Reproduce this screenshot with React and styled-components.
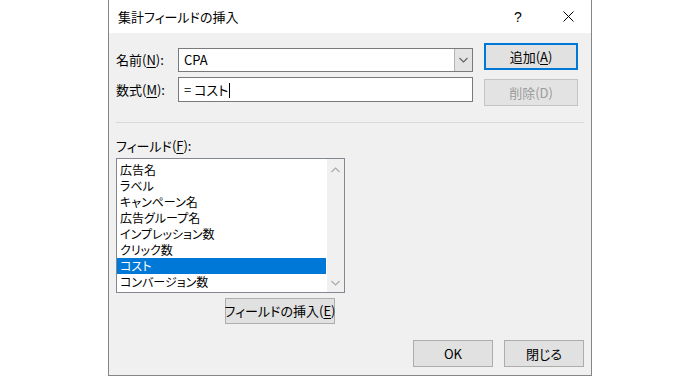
import React from "react";
import styled, { createGlobalStyle } from "styled-components";

const GlobalStyle = createGlobalStyle`
  html, body {
    margin: 0;
    padding: 0;
    background: #ffffff;
  }
  body {
    font-family: "Noto Sans CJK JP", "Noto Sans", sans-serif;
    font-size: 13px;
    color: #000000;
    font-feature-settings: "palt";
  }
`;

const Page = styled.div`
  display: flex;
  padding-left: 108px;
  width: 700px;
  height: 377px;
  box-sizing: border-box;
`;

const Dialog = styled.div`
  display: flex;
  flex-direction: column;
  width: 484px;
  height: 376px;
  box-sizing: border-box;
  border: 1px solid #858585;
  border-top: none;
  background: #f0f0f0;
`;

const TitleBar = styled.div`
  display: flex;
  align-items: center;
  height: 33px;
  background: #ffffff;
  padding-left: 9px;
`;

const Title = styled.div`
  flex: 1;
  font-size: 13px;
  line-height: 16px;
`;

const TitleButton = styled.div`
  display: flex;
  align-items: center;
  justify-content: center;
  width: 46px;
  height: 33px;
  font-family: "Liberation Sans", sans-serif;
  font-size: 14px;
  margin-right: ${(p) => p.$gap || 0}px;
`;

const Body = styled.div`
  display: flex;
  flex-direction: column;
  flex: 1;
  padding: 10px 0 8px 7px;
`;

const TopSection = styled.div`
  display: flex;
`;

const Form = styled.div`
  display: flex;
  flex-direction: column;
  gap: 5px;
  margin-top: 5px;
`;

const FormRow = styled.div`
  display: flex;
  align-items: center;
`;

const Label = styled.div`
  width: 62px;
  line-height: 16px;
`;

const Mn = styled.span`
  text-decoration: underline;
  text-underline-offset: 2px;
`;

const TextBox = styled.div`
  display: flex;
  align-items: center;
  width: 295px;
  height: ${(p) => p.$h}px;
  box-sizing: border-box;
  border: 1px solid #7a7a7a;
  background: #ffffff;
  padding-left: 5px;
`;

const BoxText = styled.span`
  flex: 1;
  line-height: 16px;
`;

const Caret = styled.span`
  display: inline-block;
  width: 0;
  height: 15px;
  border-left: 1px solid #000;
  margin-left: 1px;
  vertical-align: -3px;
`;

const DropButton = styled.div`
  display: flex;
  align-items: center;
  justify-content: center;
  width: 18px;
  height: 100%;
  box-sizing: border-box;
  background: #e3e3e3;
  border-left: 1px solid #b5b5b5;
`;

const ButtonColumn = styled.div`
  display: flex;
  flex-direction: column;
  gap: 9px;
  margin-left: 11px;
`;

const Button = styled.div`
  display: flex;
  align-items: center;
  justify-content: center;
  width: ${(p) => p.$w}px;
  height: ${(p) => p.$h || 27}px;
  box-sizing: border-box;
  white-space: nowrap;
  background: ${(p) => (p.$disabled ? "#e3e3e3" : "#e1e1e1")};
  border: ${(p) =>
    p.$default
      ? "2px solid #0078d7"
      : p.$disabled
      ? "1px solid #c4c4c4"
      : "1px solid #adadad"};
  color: ${(p) => (p.$disabled ? "#9b9b9b" : "#000000")};
  line-height: 16px;
`;

const Separator = styled.div`
  height: 1px;
  width: 468px;
  margin-top: 16px;
  background: #d9d9d9;
`;

const FieldLabel = styled.div`
  margin-top: 15px;
  line-height: 16px;
`;

const FieldArea = styled.div`
  display: flex;
  flex-direction: column;
  align-items: flex-end;
  width: 229px;
  margin-top: 4px;
`;

const ListBox = styled.div`
  display: flex;
  width: 229px;
  height: 135px;
  box-sizing: border-box;
  border: 1px solid #828790;
  background: #ffffff;
`;

const Items = styled.div`
  flex: 1;
  padding-top: 3px;
`;

const Item = styled.div`
  height: 16px;
  line-height: 16px;
  font-size: 12px;
  padding-left: 3px;
  margin-right: 1px;
  background: ${(p) => (p.$selected ? "#0078d7" : "transparent")};
  color: ${(p) => (p.$selected ? "#ffffff" : "#000000")};
`;

const ScrollBar = styled.div`
  display: flex;
  flex-direction: column;
  justify-content: space-between;
  align-items: center;
  width: 17px;
  background: #f0f0f0;
  padding: 8px 0 6px;
  box-sizing: border-box;
`;

const InsertButtonWrap = styled.div`
  margin-top: 5px;
  margin-right: 10px;
`;

const Footer = styled.div`
  display: flex;
  justify-content: flex-end;
  gap: 11px;
  margin-top: 16px;
  padding-right: 7px;
`;

const Chevron = ({ up, color = "#606060", w = 9 }) => (
  <svg width={w} height="6" viewBox="0 0 9 6">
    <path
      d={up ? "M0.5 5 L4.5 1 L8.5 5" : "M0.5 1 L4.5 5 L8.5 1"}
      fill="none"
      stroke={color}
      strokeWidth="1.1"
    />
  </svg>
);

const CloseIcon = () => (
  <svg width="11" height="11" viewBox="0 0 11 11">
    <path d="M0.5 0.5 L10.5 10.5 M10.5 0.5 L0.5 10.5" stroke="#000" strokeWidth="1" />
  </svg>
);

const fields = [
  "広告名",
  "ラベル",
  "キャンペーン名",
  "広告グループ名",
  "インプレッション数",
  "クリック数",
  "コスト",
  "コンバージョン数",
];

export default function App() {
  return (
    <>
      <GlobalStyle />
      <Page>
        <Dialog>
          <TitleBar>
            <Title>集計フィールドの挿入</Title>
            <TitleButton $gap={4}>?</TitleButton>
            <TitleButton>
              <CloseIcon />
            </TitleButton>
          </TitleBar>
          <Body>
            <TopSection>
              <Form>
                <FormRow>
                  <Label>
                    名前(<Mn>N</Mn>):
                  </Label>
                  <TextBox $h={24}>
                    <BoxText>CPA</BoxText>
                    <DropButton>
                      <Chevron />
                    </DropButton>
                  </TextBox>
                </FormRow>
                <FormRow>
                  <Label>
                    数式(<Mn>M</Mn>):
                  </Label>
                  <TextBox $h={25}>
                    <BoxText>
                      = コスト
                      <Caret />
                    </BoxText>
                  </TextBox>
                </FormRow>
              </Form>
              <ButtonColumn>
                <Button $w={94} $default>
                  追加(<Mn>A</Mn>)
                </Button>
                <Button $w={94} $disabled>
                  削除(D)
                </Button>
              </ButtonColumn>
            </TopSection>
            <Separator />
            <FieldLabel>
              フィールド(<Mn>F</Mn>):
            </FieldLabel>
            <FieldArea>
              <ListBox>
                <Items>
                  {fields.map((f) => (
                    <Item key={f} $selected={f === "コスト"}>
                      {f}
                    </Item>
                  ))}
                </Items>
                <ScrollBar>
                  <Chevron up color="#a8a8a8" />
                  <Chevron color="#a8a8a8" />
                </ScrollBar>
              </ListBox>
              <InsertButtonWrap>
                <Button $w={110} $h={26}>
                  フィールドの挿入(<Mn>E</Mn>)
                </Button>
              </InsertButtonWrap>
            </FieldArea>
            <Footer>
              <Button $w={80}>OK</Button>
              <Button $w={80}>閉じる</Button>
            </Footer>
          </Body>
        </Dialog>
      </Page>
    </>
  );
}
